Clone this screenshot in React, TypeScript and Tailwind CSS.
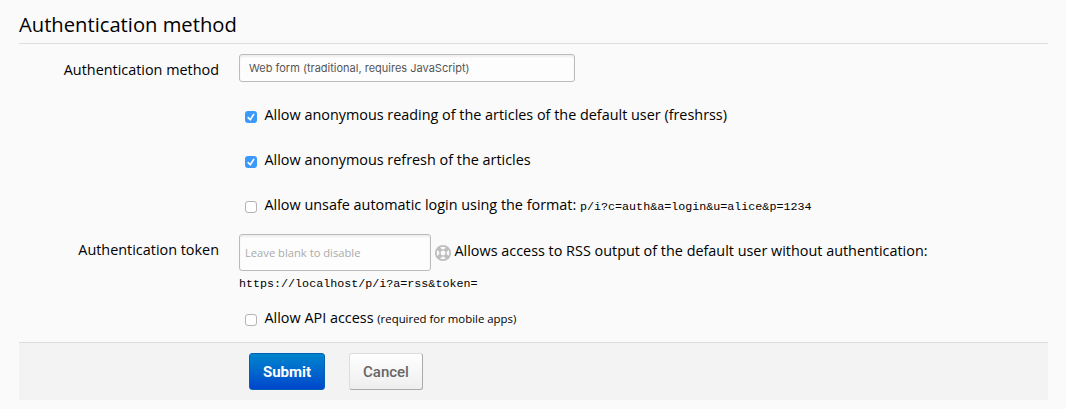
import React from "react";

function Check({ on }: { on?: boolean }) {
  return on ? (
    <span className="mt-2 flex h-3 w-3 shrink-0 items-center justify-center rounded-[3px] bg-[#3b99fc]">
      <svg viewBox="0 0 12 12" className="h-3 w-3" fill="none" stroke="#fff" strokeWidth="1.6" strokeLinecap="round" strokeLinejoin="round">
        <path d="M3.2 6.6 L5.2 8.8 L8.7 3.4" />
      </svg>
    </span>
  ) : (
    <span className="mt-2 h-3 w-3 shrink-0 rounded-[3px] border border-[#b4b4b4] bg-white" />
  );
}

function HelpIcon() {
  return (
    <svg viewBox="0 0 16 16" className="mr-[3.5px] ml-1 mt-[11px] h-4 w-4 shrink-0" fill="none">
      <circle cx="8" cy="8" r="7.1" stroke="#bebebe" strokeWidth="1.8" />
      <circle cx="8" cy="8" r="3.1" stroke="#bebebe" strokeWidth="1.4" />
      <path d="M3.2 3.2 L5.7 5.7 M12.8 3.2 L10.3 5.7 M3.2 12.8 L5.7 10.3 M12.8 12.8 L10.3 10.3" stroke="#bebebe" strokeWidth="3.8" />
    </svg>
  );
}

export default function App() {
  return (
    <div className="h-[409px] w-[1066px] overflow-hidden bg-[#fafafa] pr-[18px] pl-[19px] pt-[9px] font-['Open_Sans',sans-serif] text-[14.4px] leading-6 text-black">
      <h2 className="h-[35px] border-b border-[#ddd] text-[20.2px] leading-[31px]">Authentication method</h2>
      <div className="mt-2.5 flex h-[45px]">
        <label className="mt-1 w-[200px] text-right">Authentication method</label>
        <div className="ml-5 h-7 w-[336px] rounded-[3px] border border-[#bbb] bg-[#fdfdfd] pl-[9px] font-['Inter',sans-serif] text-[11px] leading-[27px] text-[#555] shadow-[inset_0_2px_2px_#eee]">Web form (traditional, requires JavaScript)</div>
      </div>
      <div className="ml-[226px] flex h-[45px] pt-1"><Check on /><span className="ml-[7.5px]">Allow anonymous reading of the articles of the default user (freshrss)</span></div>
      <div className="ml-[226px] flex h-[45px] pt-1"><Check on /><span className="ml-[7.5px]">Allow anonymous refresh of the articles</span></div>
      <div className="ml-[226px] flex h-[45px] pt-1"><Check /><span className="ml-[7.5px]">Allow unsafe automatic login using the format: <code className="font-['Liberation_Mono',monospace] text-[11.7px]">p/i?c=auth&amp;a=login&amp;u=alice&amp;p=1234</code></span></div>
      <div className="flex h-[37px]">
        <label className="mt-1 w-[200px] text-right">Authentication token</label>
        <div className="ml-5 w-[192px] rounded-[3px] border border-[#bbb] bg-[#fdfdfd] pl-[5px] text-[11.2px] leading-[36px] text-[#aaa] shadow-[inset_0_2px_2px_#eee]">Leave blank to disable</div>
        <HelpIcon />
        <span className="mt-[5px]">Allows access to RSS output of the default user without authentication:</span>
      </div>
      <code className="ml-[220px] block h-[31px] pt-px font-['Liberation_Mono',monospace] text-[11.7px]">https://localhost/p/i?a=rss&amp;token=</code>
      <div className="ml-[226px] flex h-[40px] pt-1"><Check /><span className="ml-[7.5px]">Allow API access <small className="text-[11.4px]">(required for mobile apps)</small></span></div>
      <div className="flex h-[58px] gap-6 border-t border-[#ddd] bg-[#f3f3f3] pl-[230px] pt-[10px]">
        <button className="h-[37px] w-[76px] rounded-[3px] border border-[#0062b7] bg-linear-to-b from-[#0084cc] to-[#0045cc] pt-px font-['Roboto',sans-serif] text-[15px] font-bold text-white">Submit</button>
        <button className="h-[37px] w-[74px] rounded-[3px] border border-[#ddd] border-r-[#aaa] border-b-[#aaa] bg-linear-to-b from-white to-[#eee] pt-px font-['Roboto',sans-serif] text-[15px] font-medium text-[#666]">Cancel</button>
      </div>
    </div>
  );
}
